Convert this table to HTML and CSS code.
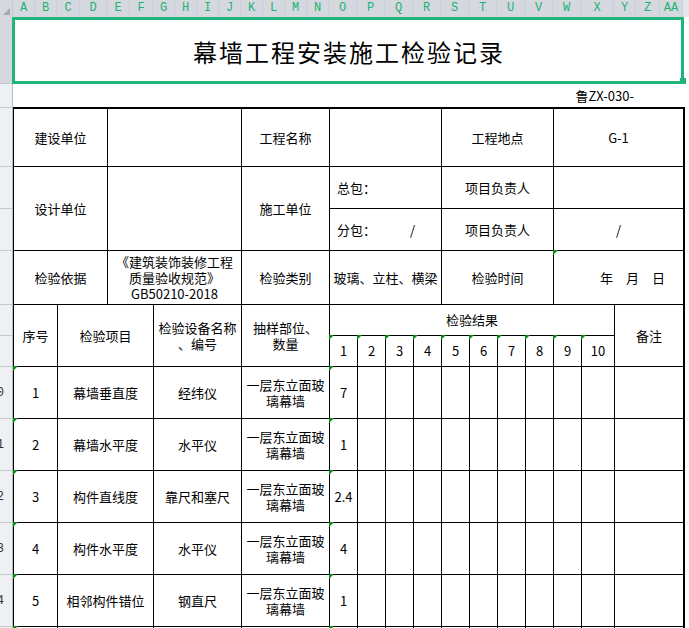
FILE: index.html
```html
<!DOCTYPE html>
<html lang="zh-CN">
<head>
<meta charset="utf-8">
<title>幕墙工程安装施工检验记录</title>
<link rel="stylesheet" href="styles.css">
</head>
<body>
<div class="colbar">
  <div class="corner"><svg width="12" height="17" viewBox="0 0 12 17"><polygon points="10,8 10,15 3,15" fill="#a6aab3"/></svg></div>
  <div class="col w22">A</div>
  <div class="col w22">B</div>
  <div class="col w23">C</div>
  <div class="col w27">D</div>
  <div class="col w23">E</div>
  <div class="col w23">F</div>
  <div class="col w22">G</div>
  <div class="col w22">H</div>
  <div class="col w22">I</div>
  <div class="col w22">J</div>
  <div class="col w22">K</div>
  <div class="col w22">L</div>
  <div class="col w22">M</div>
  <div class="col w22">N</div>
  <div class="col w28">O</div>
  <div class="col w28">P</div>
  <div class="col w28">Q</div>
  <div class="col w28">R</div>
  <div class="col w28">S</div>
  <div class="col w28">T</div>
  <div class="col w28">U</div>
  <div class="col w28">V</div>
  <div class="col w28">W</div>
  <div class="col w33">X</div>
  <div class="col w22">Y</div>
  <div class="col w24">Z</div>
  <div class="col w23">AA</div>
  <div class="fill"></div>
</div>
<div class="sheet">
  <div class="rowhdr">
    <div class="rh sel h67"></div>
    <div class="rh h24"></div>
    <div class="rh h59"></div>
    <div class="rh h42"></div>
    <div class="rh h42"></div>
    <div class="rh h54"></div>
    <div class="rh h31"></div>
    <div class="rh h31"></div>
    <div class="rh h52">10</div>
    <div class="rh h52">11</div>
    <div class="rh h52">12</div>
    <div class="rh h52">13</div>
    <div class="rh h52">14</div>
    <div class="rh h52">15</div>
  </div>
  <div class="content">
    <div class="title-box">
      <h1>幕墙工程安装施工检验记录</h1>
      <span class="handle"></span>
    </div>
    <div class="code-row"><span>鲁ZX-030-</span></div>
    <div class="form">
      <div class="cell c2">建设单位</div>
      <div class="cell c2"></div>
      <div class="cell">工程名称</div>
      <div class="cell c4"></div>
      <div class="cell c4">工程地点</div>
      <div class="cell c3">G-1</div>

      <div class="cell c2 r2">设计单位</div>
      <div class="cell c2 r2"></div>
      <div class="cell r2">施工单位</div>
      <div class="cell c4 left">总包：</div>
      <div class="cell c4">项目负责人</div>
      <div class="cell c3"></div>
      <div class="cell c4 left">分包：<span class="slash">/</span></div>
      <div class="cell c4">项目负责人</div>
      <div class="cell c3">/</div>

      <div class="cell c2">检验依据</div>
      <div class="cell c2">《建筑装饰装修工程<br>质量验收规范》<br>GB50210-2018</div>
      <div class="cell">检验类别</div>
      <div class="cell c4">玻璃、立柱、横梁</div>
      <div class="cell c4">检验时间</div>
      <div class="cell c3 date tri"><span>年</span><span>月</span><span>日</span></div>

      <div class="cell r2">序号</div>
      <div class="cell c2 r2">检验项目</div>
      <div class="cell r2">检验设备名称<br>、编号</div>
      <div class="cell r2">抽样部位、<br>数量</div>
      <div class="cell c10">检验结果</div>
      <div class="cell r2">备注</div>
      <div class="cell tri">1</div>
      <div class="cell tri">2</div>
      <div class="cell tri">3</div>
      <div class="cell tri">4</div>
      <div class="cell tri">5</div>
      <div class="cell tri">6</div>
      <div class="cell tri">7</div>
      <div class="cell tri">8</div>
      <div class="cell tri">9</div>
      <div class="cell tri">10</div>

      <div class="cell tri">1</div>
      <div class="cell c2">幕墙垂直度</div>
      <div class="cell">经纬仪</div>
      <div class="cell">一层东立面玻<br>璃幕墙</div>
      <div class="cell tri">7</div>
      <div class="cell"></div><div class="cell"></div><div class="cell"></div><div class="cell"></div><div class="cell"></div><div class="cell"></div><div class="cell"></div><div class="cell"></div><div class="cell"></div>
      <div class="cell"></div>

      <div class="cell tri">2</div>
      <div class="cell c2">幕墙水平度</div>
      <div class="cell">水平仪</div>
      <div class="cell">一层东立面玻<br>璃幕墙</div>
      <div class="cell tri">1</div>
      <div class="cell"></div><div class="cell"></div><div class="cell"></div><div class="cell"></div><div class="cell"></div><div class="cell"></div><div class="cell"></div><div class="cell"></div><div class="cell"></div>
      <div class="cell"></div>

      <div class="cell tri">3</div>
      <div class="cell c2">构件直线度</div>
      <div class="cell">靠尺和塞尺</div>
      <div class="cell">一层东立面玻<br>璃幕墙</div>
      <div class="cell tri">2.4</div>
      <div class="cell"></div><div class="cell"></div><div class="cell"></div><div class="cell"></div><div class="cell"></div><div class="cell"></div><div class="cell"></div><div class="cell"></div><div class="cell"></div>
      <div class="cell"></div>

      <div class="cell tri">4</div>
      <div class="cell c2">构件水平度</div>
      <div class="cell">水平仪</div>
      <div class="cell">一层东立面玻<br>璃幕墙</div>
      <div class="cell tri">4</div>
      <div class="cell"></div><div class="cell"></div><div class="cell"></div><div class="cell"></div><div class="cell"></div><div class="cell"></div><div class="cell"></div><div class="cell"></div><div class="cell"></div>
      <div class="cell"></div>

      <div class="cell tri">5</div>
      <div class="cell c2">相邻构件错位</div>
      <div class="cell">钢直尺</div>
      <div class="cell">一层东立面玻<br>璃幕墙</div>
      <div class="cell tri">1</div>
      <div class="cell"></div><div class="cell"></div><div class="cell"></div><div class="cell"></div><div class="cell"></div><div class="cell"></div><div class="cell"></div><div class="cell"></div><div class="cell"></div>
      <div class="cell"></div>

      <div class="cell tri"></div>
      <div class="cell c2"></div>
      <div class="cell"></div>
      <div class="cell"></div>
      <div class="cell tri"></div>
      <div class="cell"></div><div class="cell"></div><div class="cell"></div><div class="cell"></div><div class="cell"></div><div class="cell"></div><div class="cell"></div><div class="cell"></div><div class="cell"></div>
      <div class="cell"></div>
    </div>
  </div>
</div>
</body>
</html>
```

FILE: styles.css
```css
* {
  box-sizing: border-box;
  margin: 0;
  padding: 0;
}

html,
body {
  width: 689px;
  height: 628px;
  overflow: hidden;
  background: #fff;
}

body {
  font-family: "Noto Sans CJK SC", "Noto Sans", sans-serif;
  font-size: 13px;
  color: #000;
}

/* column letter bar */
.colbar {
  display: flex;
  height: 17px;
  background: #d5d8df;
}

.corner {
  width: 13px;
  flex: none;
  border-right: 1px solid #c6cad2;
}

.corner svg {
  display: block;
}

.col {
  flex: none;
  display: flex;
  align-items: center;
  justify-content: center;
  border-right: 1px solid #c9cdd5;
  font-family: "Liberation Mono", monospace;
  font-size: 12px;
  line-height: 17px;
  color: #1eb274;
}

.w22 { width: 22px; }
.w23 { width: 23px; }
.w24 { width: 24px; }
.w27 { width: 27px; }
.w28 { width: 28px; }
.w33 { width: 33px; }

.fill {
  flex: 1;
  background: #e4e6ea;
}

/* sheet body */
.sheet {
  display: flex;
}

.rowhdr {
  width: 13px;
  flex: none;
  background: #eef0f4;
  border-right: 1px solid #b8bec9;
}

.rh {
  display: flex;
  align-items: center;
  justify-content: flex-end;
  padding-right: 8px;
  overflow: hidden;
  white-space: nowrap;
  border-bottom: 1px solid #c3c8d2;
  font-family: "Liberation Mono", monospace;
  font-size: 12px;
  color: #333;
}

.rh.sel {
  background: #d5d8df;
}

.h24 { height: 24px; }
.h31 { height: 31px; }
.h42 { height: 42px; }
.h52 { height: 52px; }
.h54 { height: 54px; }
.h59 { height: 59px; }
.h67 { height: 67px; }

.content {
  flex: 1;
}

.title-box {
  position: relative;
  width: 672px;
  height: 67px;
  margin-left: -1px;
  border: 3px solid #1fb57a;
  display: flex;
  align-items: center;
  justify-content: center;
}

.title-box h1 {
  font-size: 24px;
  font-weight: normal;
  letter-spacing: 2px;
  padding-left: 2px;
  padding-top: 3px;
  line-height: 1;
}

.handle {
  position: absolute;
  right: -5px;
  bottom: -3px;
  width: 6px;
  height: 6px;
  background: #1fb57a;
}

.code-row {
  height: 23px;
  display: flex;
  align-items: center;
  justify-content: flex-end;
  padding-right: 55px;
}

/* inspection form grid */
.form {
  display: grid;
  width: 672px;
  grid-template-columns: 44px 50px 46px 88px 88px repeat(9, 28px) 33px 69px;
  grid-template-rows: 58px 42px 42px 54px 31px 31px repeat(6, 52px);
  border-top: 2px solid #000;
  border-left: 1px solid #000;
  border-right: 1px solid #000;
}

.cell {
  position: relative;
  display: flex;
  align-items: center;
  justify-content: center;
  text-align: center;
  line-height: 16px;
  border-right: 1px solid #000;
  border-bottom: 1px solid #000;
  white-space: nowrap;
}

.c2 { grid-column: span 2; }
.c3 { grid-column: span 3; }
.c4 { grid-column: span 4; }
.c10 { grid-column: span 10; }
.r2 { grid-row: span 2; }

.cell.left {
  justify-content: flex-start;
  padding-left: 7px;
}

.slash {
  margin-left: 34px;
}

.cell.date {
  justify-content: flex-end;
  gap: 13px;
  padding-right: 18px;
}

.tri::before {
  content: "";
  position: absolute;
  top: -1px;
  left: -1px;
  width: 0;
  height: 0;
  border-top: 5px solid #118a11;
  border-right: 5px solid transparent;
}
```
